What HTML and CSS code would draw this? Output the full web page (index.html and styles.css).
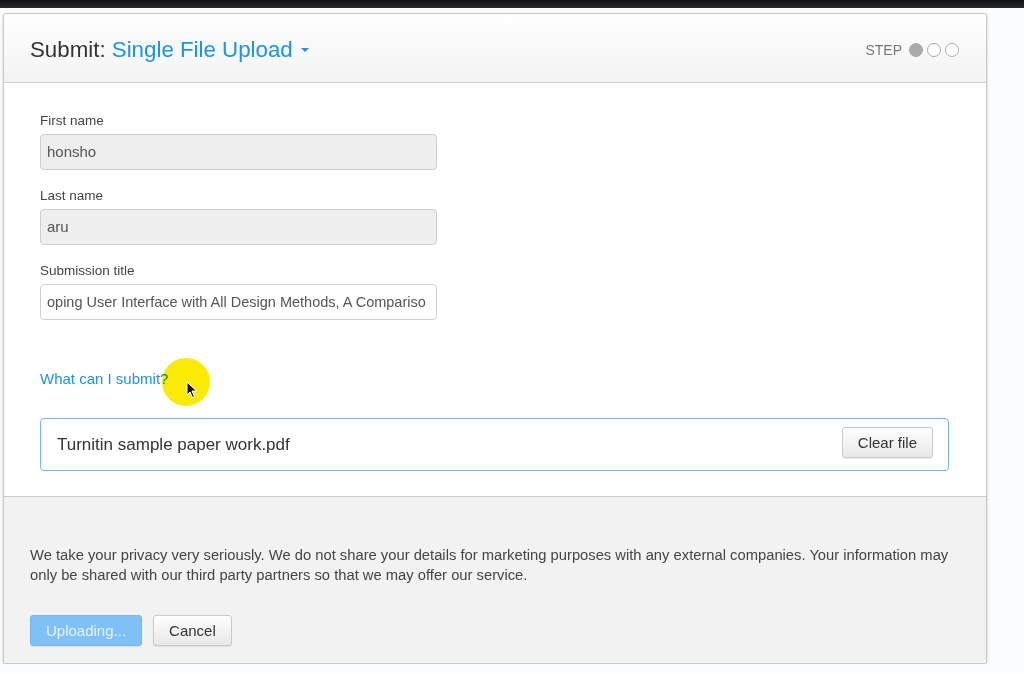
FILE: index.html
```html
<!DOCTYPE html>
<html lang="en">
<head>
  <meta charset="UTF-8" />
  <title>Submit: Single File Upload</title>
  <link rel="stylesheet" href="styles.css">
</head>
<body>
  <div class="topbar"></div>

  <div class="modal">
    <!-- Header -->
    <div class="modal-header">
      <h1 class="title">Submit: <span class="title-link">Single File Upload <span class="caret"></span></span></h1>
      <div class="steps">
        <span class="step-label">STEP</span>
        <span class="dot active"></span>
        <span class="dot"></span>
        <span class="dot"></span>
      </div>
    </div>

    <!-- Form -->
    <div class="modal-body">
      <div class="field">
        <label>First name</label>
        <div class="input readonly">honsho</div>
      </div>
      <div class="field">
        <label>Last name</label>
        <div class="input readonly">aru</div>
      </div>
      <div class="field">
        <label>Submission title</label>
        <div class="input input-title">oping User Interface with All Design Methods, A Compariso</div>
      </div>

      <a class="help-link" href="#">What can I submit?</a>

      <div class="file-box">
        <span class="file-name">Turnitin sample paper work.pdf</span>
        <button class="btn">Clear file</button>
      </div>

      <!-- screen recorder cursor highlight -->
      <div class="cursor-spot">
        <svg class="pointer" width="12" height="18" viewBox="0 0 12 18">
          <path d="M1 1 L1 14 L4 11 L6.5 16.5 L8.5 15.5 L6 10 L10.5 10 Z" fill="#111" stroke="#fff" stroke-width="1"/>
        </svg>
      </div>
    </div>

    <!-- Footer -->
    <div class="modal-footer">
      <p class="privacy">We take your privacy very seriously. We do not share your details for marketing purposes with any external companies. Your information may only be shared with our third party partners so that we may offer our service.</p>
      <div class="actions">
        <button class="btn btn-primary">Uploading...</button>
        <button class="btn">Cancel</button>
      </div>
    </div>
  </div>
</body>
</html>
```

FILE: styles.css
```css
body {
  margin: 0;
  background-color: #fbfcfd;
  font-family: 'Liberation Sans', Arial, sans-serif;
  color: #333;
}
.topbar {
  height: 8px;
  background: linear-gradient(#111, #2a2a2e);
}
.modal {
  width: 982px;
  margin: 5px 0 0 3px;
  border: 1px solid #c8c8c8;
  border-radius: 3px;
  background: #fff;
  box-shadow: 0 1px 3px rgba(0, 0, 0, 0.2);
}
.modal-header {
  height: 69px;
  padding: 3px 26px 0 26px;
  box-sizing: border-box;
  display: flex;
  align-items: center;
  justify-content: space-between;
  background: linear-gradient(#ffffff, #f3f3f3);
  border-bottom: 1px solid #cfcfcf;
  border-radius: 3px 3px 0 0;
}
.title {
  margin: 0;
  font-size: 22.3px;
  font-weight: normal;
  color: #333;
}
.title-link {
  color: #1b93ec;
}
.caret {
  display: inline-block;
  width: 0;
  height: 0;
  margin-left: 2px;
  vertical-align: 5px;
  border-left: 4px solid transparent;
  border-right: 4px solid transparent;
  border-top: 4px solid #1b93ec;
}
.steps {
  display: flex;
  align-items: center;
  gap: 4px;
  margin-right: 1px;
}
.step-label {
  font-size: 14px;
  color: #777;
  margin-right: 3px;
}
.dot {
  width: 12px;
  height: 12px;
  border-radius: 50%;
  border: 1px solid #aaa;
  background: #fff;
}
.dot.active {
  background: #aaa;
}
.modal-body {
  position: relative;
  padding: 30px 37px 25px 36px;
  border-bottom: 1px solid #c9c9c9;
}
.field {
  margin-bottom: 18px;
}
.field label {
  display: block;
  font-size: 13.5px;
  color: #444;
  margin-bottom: 6px;
}
.input {
  width: 383px;
  height: 34px;
  line-height: 34px;
  padding: 0 6px;
  border: 1px solid #cfcfcf;
  border-radius: 4px;
  font-size: 15px;
  color: #555;
  background: #fff;
  overflow: hidden;
  white-space: nowrap;
}
.input.readonly {
  background: #eeeeee;
}
.input-title {
  font-size: 14.5px;
}
.help-link {
  display: inline-block;
  margin-top: 32px;
  font-size: 15px;
  color: #1b93ec;
  text-decoration: none;
}
.file-box {
  margin-top: 30px;
  height: 51px;
  padding: 0 15px 0 16px;
  display: flex;
  align-items: center;
  justify-content: space-between;
  border: 1px solid #7ab3e8;
  border-radius: 4px;
}
.file-box .btn {
  margin-bottom: 5px;
}
.file-name {
  font-size: 17px;
  color: #333;
}
.btn {
  height: 31px;
  padding: 0 15px;
  font-family: 'Liberation Sans', Arial, sans-serif;
  font-size: 15px;
  color: #333;
  background: linear-gradient(#ffffff, #e8e8e8);
  border: 1px solid #cacaca;
  border-radius: 3px;
  box-shadow: 0 1px 1px rgba(0, 0, 0, 0.08);
}
.btn-primary {
  background: #7fc0f6;
  border-color: #78b8ee;
  color: #e6f3ff;
}
.cursor-spot {
  position: absolute;
  left: 158px;
  top: 275px;
  width: 48px;
  height: 48px;
  border-radius: 50%;
  background: #fbea05;
  mix-blend-mode: multiply;
}
.pointer {
  position: absolute;
  left: 24px;
  top: 23px;
}
.modal-footer {
  background: #f2f2f2;
  padding: 48px 26px 17px 26px;
  border-radius: 0 0 3px 3px;
}
.privacy {
  margin: 0 0 30px 0;
  font-size: 14.75px;
  line-height: 20px;
  color: #444;
}
.actions {
  display: flex;
  gap: 11px;
}
```
